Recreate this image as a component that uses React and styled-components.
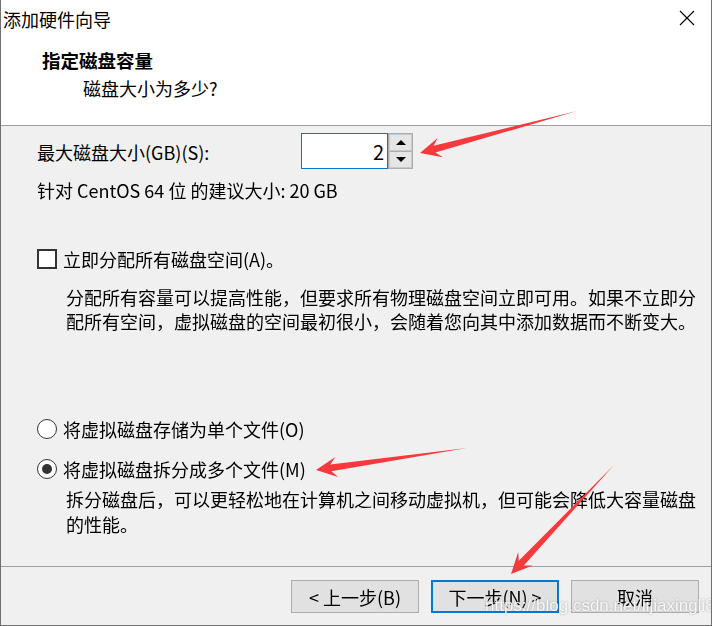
import React, { useState } from "react";
import styled, { createGlobalStyle } from "styled-components";

const GlobalStyle = createGlobalStyle`
  html, body {
    margin: 0;
    padding: 0;
    background: #f0f0f0;
  }
  body {
    font-family: "Noto Sans CJK SC", "Noto Sans", sans-serif;
    color: #000;
  }
`;

const Window = styled.div`
  position: relative;
  width: 712px;
  height: 626px;
  box-sizing: border-box;
  border: 1px solid #707070;
  border-top: none;
  background: #f0f0f0;
  display: flex;
  flex-direction: column;
  overflow: hidden;
`;

const TitleBar = styled.div`
  height: 38px;
  background: #fff;
  display: flex;
  align-items: center;
  justify-content: space-between;
  padding: 0 16px 0 2px;
  font-size: 18px;
  line-height: 24px;
`;

const CloseButton = styled.div`
  width: 16px;
  height: 16px;
  margin-top: -2px;
  display: flex;
`;

const Header = styled.div`
  background: #fff;
  height: 88px;
  box-sizing: border-box;
  border-bottom: 1px solid #a0a0a0;
  padding: 10px 0 0 41px;
`;

const HeaderTitle = styled.div`
  font-size: 18.5px;
  font-weight: bold;
  line-height: 24px;
`;

const HeaderSub = styled.div`
  font-size: 18px;
  line-height: 24px;
  margin: 4px 0 0 41px;
`;

const Body = styled.div`
  flex: 1;
  padding: 7px 0 0 36px;
  border-bottom: 1px solid #a0a0a0;
  font-size: 18px;
  line-height: 24px;
`;

const SizeRow = styled.div`
  display: flex;
  align-items: center;
  height: 36px;
`;

const SizeLabel = styled.div`
  width: 264px;
  padding-top: 1px;
`;

const Spin = styled.div`
  display: flex;
  height: 36px;
`;

const SpinInput = styled.input`
  width: 87px;
  height: 36px;
  box-sizing: border-box;
  border: 1px solid #0078d7;
  background: #fff;
  text-align: right;
  font: inherit;
  font-size: 20px;
  padding: 0 3px 0 4px;
  outline: none;
  caret-color: #000;
`;

const SpinButtons = styled.div`
  width: 25px;
  height: 36px;
  box-sizing: border-box;
  border: 1px solid #adadad;
  display: flex;
  flex-direction: column;
  background: #f0f0f0;
`;

const SpinButton = styled.div`
  flex: 1;
  background: #e5e5e5;
  border: 1px solid #c8c8c8;
  display: flex;
  align-items: center;
  justify-content: center;
  & + & {
    border-top: 1px solid #adadad;
  }
`;

const Triangle = styled.div`
  width: 0;
  height: 0;
  border-left: 5px solid transparent;
  border-right: 5px solid transparent;
  ${(p) =>
    p.$up
      ? "border-bottom: 5px solid #000;"
      : "border-top: 5px solid #000;"}
`;

const Recommend = styled.div`
  margin-top: 9px;
`;

const OptionRow = styled.label`
  display: flex;
  align-items: center;
  gap: 6px;
  margin-top: ${(p) => p.$top}px;
  cursor: default;
`;

const CheckBox = styled.span`
  width: 20px;
  height: 20px;
  box-sizing: border-box;
  border: 2px solid #333;
  background: #fff;
  flex-shrink: 0;
`;

const Radio = styled.span`
  width: 20px;
  height: 20px;
  box-sizing: border-box;
  border: 1.5px solid #333;
  border-radius: 50%;
  background: #fff;
  flex-shrink: 0;
  display: flex;
  align-items: center;
  justify-content: center;
  &::after {
    content: "";
    width: 10px;
    height: 10px;
    border-radius: 50%;
    background: ${(p) => (p.$checked ? "#333" : "transparent")};
  }
`;

const Description = styled.div`
  margin-top: ${(p) => p.$top}px;
  padding-left: 29px;
  line-height: ${(p) => p.$lh || 24}px;
`;

const Line = styled.div`
  white-space: nowrap;
`;

const Footer = styled.div`
  height: 58px;
  display: flex;
  justify-content: flex-end;
  gap: 12px;
  padding: 13px 12px 0 0;
  box-sizing: border-box;
`;

const Button = styled.button`
  width: 128px;
  height: 33px;
  box-sizing: border-box;
  background: #e1e1e1;
  border: ${(p) => (p.$default ? "2px solid #0078d7" : "1px solid #adadad")};
  font-family: inherit;
  font-size: 18px;
  color: #000;
  padding: 0;
  display: flex;
  align-items: center;
  justify-content: center;
`;

const Overlay = styled.svg`
  position: absolute;
  left: 0;
  top: 0;
  pointer-events: none;
`;

const Watermark = styled.div`
  position: absolute;
  left: 484px;
  top: 595px;
  font-family: "Liberation Sans", Arial, sans-serif;
  font-size: 17px;
  line-height: 22px;
  color: rgba(255, 255, 255, 0.9);
  text-shadow: 0 0 2px rgba(90, 90, 90, 0.55);
  pointer-events: none;
  white-space: nowrap;
`;

function arrowPoints(tx, ty, px, py, len, head, neck) {
  const dx = px - tx;
  const dy = py - ty;
  const d = Math.hypot(dx, dy);
  const ux = dx / d;
  const uy = dy / d;
  const nx = -uy;
  const ny = ux;
  const notchX = px - ux * len * 0.75;
  const notchY = py - uy * len * 0.75;
  const barbX = px - ux * len * 1.05;
  const barbY = py - uy * len * 1.05;
  const pts = [
    [tx, ty],
    [notchX + nx * neck, notchY + ny * neck],
    [barbX + nx * head, barbY + ny * head],
    [px, py],
    [barbX - nx * head, barbY - ny * head],
    [notchX - nx * neck, notchY - ny * neck],
  ];
  return pts.map((p) => p.map((v) => v.toFixed(1)).join(",")).join(" ");
}

const arrows = [
  [576, 111, 419, 153],
  [466, 448, 315, 470],
  [613, 465, 510, 574],
];

export default function App() {
  const [size, setSize] = useState("2");
  const [split, setSplit] = useState(true);
  const [allocate, setAllocate] = useState(false);

  return (
    <>
      <GlobalStyle />
      <Window>
        <TitleBar>
          <span>添加硬件向导</span>
          <CloseButton>
            <svg width="16" height="16" viewBox="0 0 16 16">
              <path d="M1 1 L15 15 M15 1 L1 15" stroke="#000" strokeWidth="1.1" />
            </svg>
          </CloseButton>
        </TitleBar>
        <Header>
          <HeaderTitle>指定磁盘容量</HeaderTitle>
          <HeaderSub>磁盘大小为多少?</HeaderSub>
        </Header>
        <Body>
          <SizeRow>
            <SizeLabel>最大磁盘大小(GB)(S):</SizeLabel>
            <Spin>
              <SpinInput autoFocus value={size} onChange={(e) => setSize(e.target.value)} />
              <SpinButtons>
                <SpinButton>
                  <Triangle $up />
                </SpinButton>
                <SpinButton>
                  <Triangle />
                </SpinButton>
              </SpinButtons>
            </Spin>
          </SizeRow>
          <Recommend>针对 CentOS 64 位 的建议大小: 20 GB</Recommend>

          <OptionRow $top={45} onClick={() => setAllocate(!allocate)}>
            <CheckBox />
            <span>立即分配所有磁盘空间(A)。</span>
          </OptionRow>
          <Description $top={14}>
            <Line>分配所有容量可以提高性能，但要求所有物理磁盘空间立即可用。如果不立即分</Line>
            <Line>配所有空间，虚拟磁盘的空间最初很小，会随着您向其中添加数据而不断变大。</Line>
          </Description>

          <OptionRow $top={84} onClick={() => setSplit(false)}>
            <Radio $checked={!split} />
            <span>将虚拟磁盘存储为单个文件(O)</span>
          </OptionRow>
          <OptionRow $top={16} onClick={() => setSplit(true)}>
            <Radio $checked={split} />
            <span>将虚拟磁盘拆分成多个文件(M)</span>
          </OptionRow>
          <Description $top={6} $lh={25}>
            <Line>拆分磁盘后，可以更轻松地在计算机之间移动虚拟机，但可能会降低大容量磁盘</Line>
            <Line>的性能。</Line>
          </Description>
        </Body>
        <Footer>
          <Button>&lt; 上一步(B)</Button>
          <Button $default>下一步(N) &gt;</Button>
          <Button>取消</Button>
        </Footer>

        <Watermark>https://blog.csdn.net/lijiaxingli8</Watermark>
        <Overlay width="712" height="626" viewBox="0 0 712 626">
          {arrows.map(([tx, ty, px, py], i) => (
            <polygon
              key={i}
              points={arrowPoints(tx, ty, px, py, 20, 10, 3.5)}
              fill="#f5393c"
            />
          ))}
        </Overlay>
      </Window>
    </>
  );
}
